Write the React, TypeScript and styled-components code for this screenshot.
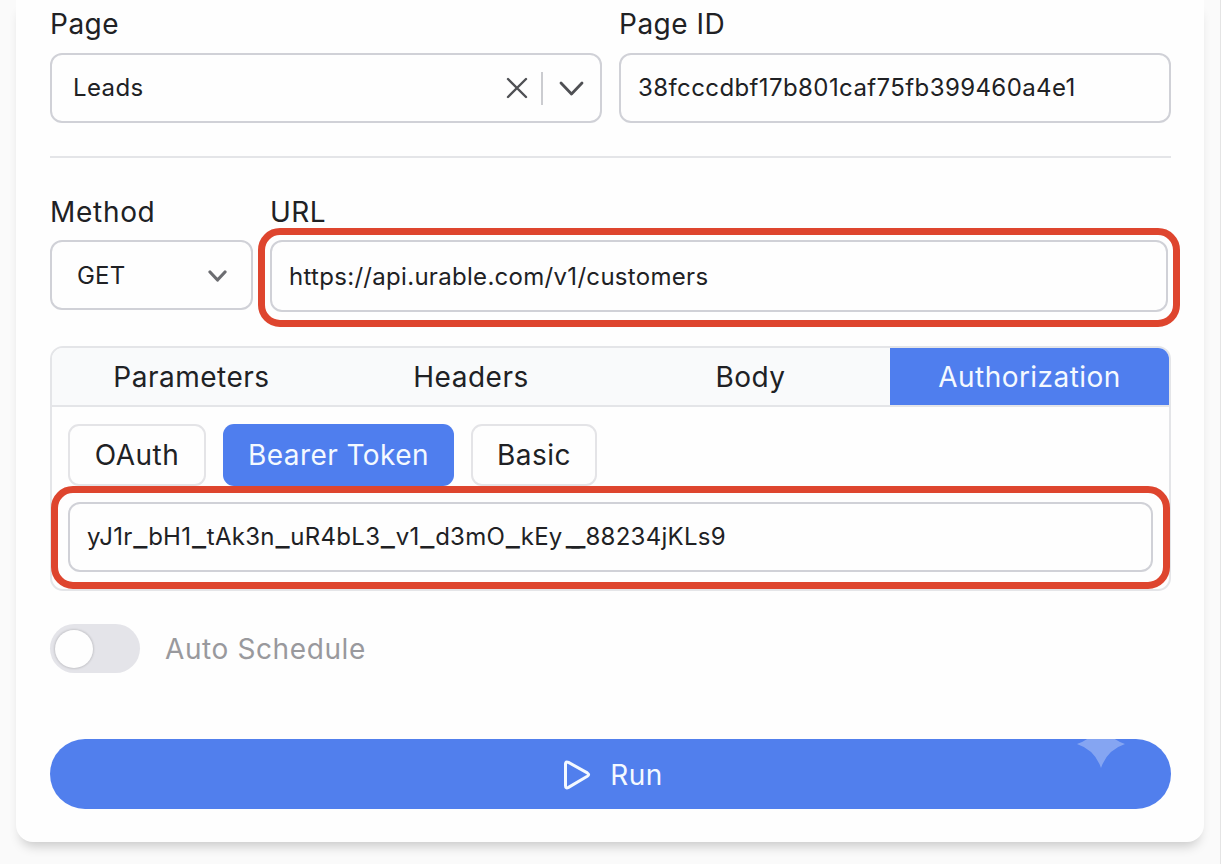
import React from "react";
import styled, { createGlobalStyle } from "styled-components";

const GlobalStyle = createGlobalStyle`
  * { box-sizing: border-box; }
  html, body { margin: 0; padding: 0; }
  body {
    background: #fafafa;
    font-family: Inter, "Liberation Sans", sans-serif;
    color: #202124;
    overflow: hidden;
  }
`;

const Page = styled.div`
  height: 864px;
  padding: 0 16px;
  border-right: 1px solid #e4e4e4;
  overflow: hidden;
`;

const Card = styled.main`
  height: 842px;
  padding: 7px 33px 0 34px;
  background: #fefefe;
  border-radius: 0 0 17px 17px;
  box-shadow: 0 9px 12px -5px rgba(0, 0, 0, 0.2);
`;

const Text = styled.span<{ $ls?: number }>`
  letter-spacing: ${(p) => p.$ls ?? 0}px;
  white-space: nowrap;
`;

const Row = styled.div`
  display: flex;
  align-items: flex-start;
  gap: 17px;
`;

const Field = styled.div<{ $width: number }>`
  width: ${(p) => p.$width}px;
`;

const Label = styled.label<{ $height?: number }>`
  display: block;
  height: ${(p) => p.$height ?? 46}px;
  font-size: 28px;
  font-weight: 420;
  line-height: 34px;
`;

const Box = styled.div<{ $pad: number; $height?: number; $top?: number }>`
  display: flex;
  align-items: center;
  height: ${(p) => p.$height ?? 70}px;
  padding: ${(p) => p.$top ?? 0}px 16px 0 ${(p) => p.$pad}px;
  border: 2px solid #d0d1d7;
  border-radius: 12px;
  background: #fefefe;
  font-size: 24px;
  line-height: 30px;
`;

const Actions = styled.div<{ $end?: number }>`
  display: flex;
  align-items: center;
  margin-left: auto;
  margin-right: ${(p) => p.$end ?? 0}px;
`;

const Separator = styled.span`
  width: 2px;
  height: 33px;
  margin: 0 16px 0 13px;
  background: #cbccd0;
`;

const Divider = styled.hr`
  height: 2px;
  margin: 33px 0 37px;
  border: 0;
  background: #e4e5e8;
`;

const Highlighted = styled.div`
  position: relative;
`;

const Ring = styled.div<{ $inset: string }>`
  position: absolute;
  inset: ${(p) => p.$inset};
  border: 7px solid #de452e;
  border-radius: 22px;
  pointer-events: none;
`;

const Panel = styled.section`
  height: 245px;
  margin-top: 34px;
  border: 2px solid #e4e5e8;
  border-radius: 13px;
`;

const Tabs = styled.nav`
  display: grid;
  grid-template-columns: 279px 280px 279px 279px;
  height: 59px;
  border-bottom: 2px solid #e4e5e8;
  border-radius: 11px 11px 0 0;
  background: #f9fafb;
  overflow: hidden;
`;

const Tab = styled.button<{ $active?: boolean }>`
  padding: 0;
  border: 0;
  background: ${(p) => (p.$active ? "#4f7eee" : "transparent")};
  color: ${(p) => (p.$active ? "#f4f9ff" : "#202124")};
  font: 28px/34px Inter, sans-serif;
`;

const AuthTypes = styled.div`
  display: flex;
  gap: 17px;
  padding: 17px 16px 0;
`;

const AuthType = styled.button<{ $active?: boolean; $width: number }>`
  width: ${(p) => p.$width}px;
  height: 62px;
  padding: 0;
  border: ${(p) => (p.$active ? "0" : "2px solid #e4e4e7")};
  border-radius: 11px;
  background: ${(p) => (p.$active ? "#4f7eee" : "#fefefe")};
  color: ${(p) => (p.$active ? "#f4f9ff" : "#202124")};
  font: 28px/34px Inter, sans-serif;
`;

const TokenField = styled(Highlighted)`
  margin: 16px 16px 0;
`;

const Underscore = styled.span<{ $double?: boolean }>`
  margin-left: ${(p) => (p.$double ? 3 : 0.6)}px;
  margin-right: ${(p) => (p.$double ? 8.5 : 0.8)}px;
  font-size: 31px;
  line-height: 0;
  letter-spacing: ${(p) => (p.$double ? -8.5 : 0)}px;
  vertical-align: -1px;
`;

const Schedule = styled.div`
  display: flex;
  align-items: center;
  gap: 25px;
  margin-top: 33px;
  color: #99999d;
  font-size: 28px;
  font-weight: 420;
  line-height: 34px;
`;

const Toggle = styled.span`
  display: flex;
  align-items: center;
  width: 90px;
  height: 49px;
  padding-left: 5px;
  border-radius: 25px;
  background: #e4e4e9;
`;

const Knob = styled.span`
  width: 38px;
  height: 38px;
  border-radius: 50%;
  background: #fefefe;
  box-shadow: 0 0 2px 1px rgba(0, 0, 0, 0.13);
`;

const RunButton = styled.button`
  position: relative;
  display: flex;
  align-items: center;
  justify-content: center;
  gap: 19px;
  width: 100%;
  height: 70px;
  margin-top: 66px;
  padding: 2px 0 0 5px;
  border: 0;
  border-radius: 35px;
  background: #517fed;
  color: #f4f9ff;
  font: 420 28px/34px Inter, sans-serif;
  overflow: hidden;
`;

const Sparkle = styled.svg`
  position: absolute;
  top: -19px;
  right: 46px;
`;

const Chevron = ({ w, h, sw, color }: { w: number; h: number; sw: number; color: string }) => (
  <svg width={w + 4} height={h + 4} fill="none" stroke={color} strokeWidth={sw} strokeLinecap="round" strokeLinejoin="round">
    <path d={`M2 2 L${2 + w / 2} ${2 + h} L${2 + w} 2`} />
  </svg>
);

const tokenParts = ["yJ1r", "bH1", "tAk3n", "uR4bL3", "v1", "d3mO", "kEy"];

export default function App() {
  return (
    <>
      <GlobalStyle />
      <Page>
        <Card>
          <Row>
            <Field $width={552}>
              <Label><Text $ls={0.5}>Page</Text></Label>
              <Box $pad={21}>
                <Text $ls={0.4}>Leads</Text>
                <Actions>
                  <svg width="22" height="22" fill="none" stroke="#4f5054" strokeWidth="2.4" strokeLinecap="round">
                    <path d="M2 2L20 20M20 2L2 20" />
                  </svg>
                  <Separator />
                  <Chevron w={21} h={11} sw={2.8} color="#4f5054" />
                </Actions>
              </Box>
            </Field>
            <Field $width={552}>
              <Label><Text $ls={0.5}>Page ID</Text></Label>
              <Box $pad={17}><Text $ls={0.4}>38fcccdbf17b801caf75fb399460a4e1</Text></Box>
            </Field>
          </Row>
          <Divider />
          <Row>
            <Field $width={203}>
              <Label $height={45}><Text $ls={0.7}>Method</Text></Label>
              <Box $pad={25} $top={2}>
                <Text $ls={0.2}>GET</Text>
                <Actions $end={8}>
                  <Chevron w={15} h={8} sw={3.2} color="#6c6d71" />
                </Actions>
              </Box>
            </Field>
            <Field $width={898}>
              <Label $height={45}><Text $ls={0.4}>URL</Text></Label>
              <Highlighted>
                <Box $pad={17} $height={72} $top={2}><Text $ls={0.3}>https://api.urable.com/v1/customers</Text></Box>
                <Ring $inset="-12px -12px -15px -12px" />
              </Highlighted>
            </Field>
          </Row>
          <Panel>
            <Tabs>
              <Tab><Text $ls={0.5}>Parameters</Text></Tab>
              <Tab><Text $ls={0.5}>Headers</Text></Tab>
              <Tab><Text $ls={0.5}>Body</Text></Tab>
              <Tab $active><Text $ls={0.45}>Authorization</Text></Tab>
            </Tabs>
            <AuthTypes>
              <AuthType $width={138}><Text $ls={0.5}>OAuth</Text></AuthType>
              <AuthType $active $width={231}><Text $ls={0.45}>Bearer Token</Text></AuthType>
              <AuthType $width={126}><Text $ls={0.5}>Basic</Text></AuthType>
            </AuthTypes>
            <TokenField>
              <Box $pad={17}>
                <Text $ls={0.28}>
                  {tokenParts.map((part, i) => (
                    <React.Fragment key={part}>
                      {part}
                      {i < tokenParts.length - 1 ? <Underscore>_</Underscore> : <Underscore $double>__</Underscore>}
                    </React.Fragment>
                  ))}
                  88234jKLs9
                </Text>
              </Box>
              <Ring $inset="-16px -17px -17px -17px" />
            </TokenField>
          </Panel>
          <Schedule>
            <Toggle><Knob /></Toggle>
            <Text $ls={0.6}>Auto Schedule</Text>
          </Schedule>
          <RunButton>
            <svg width="28" height="30" viewBox="0 0 28 30" fill="none" stroke="#f4f9ff" strokeWidth="3" strokeLinejoin="round">
              <path d="M2.5 4.2 Q2.5 0.8 5.5 2.4 L24.3 12.9 Q27 14.6 24.3 16.3 L5.5 27.4 Q2.5 29 2.5 25.8 Z" />
            </svg>
            <Text $ls={0.5}>Run</Text>
            <Sparkle width="48" height="48" viewBox="0 0 48 48">
              <path d="M24 0 Q30 18 48 24 Q30 30 24 48 Q18 30 0 24 Q18 18 24 0Z" fill="#fff" fillOpacity=".3" />
            </Sparkle>
          </RunButton>
        </Card>
      </Page>
    </>
  );
}
